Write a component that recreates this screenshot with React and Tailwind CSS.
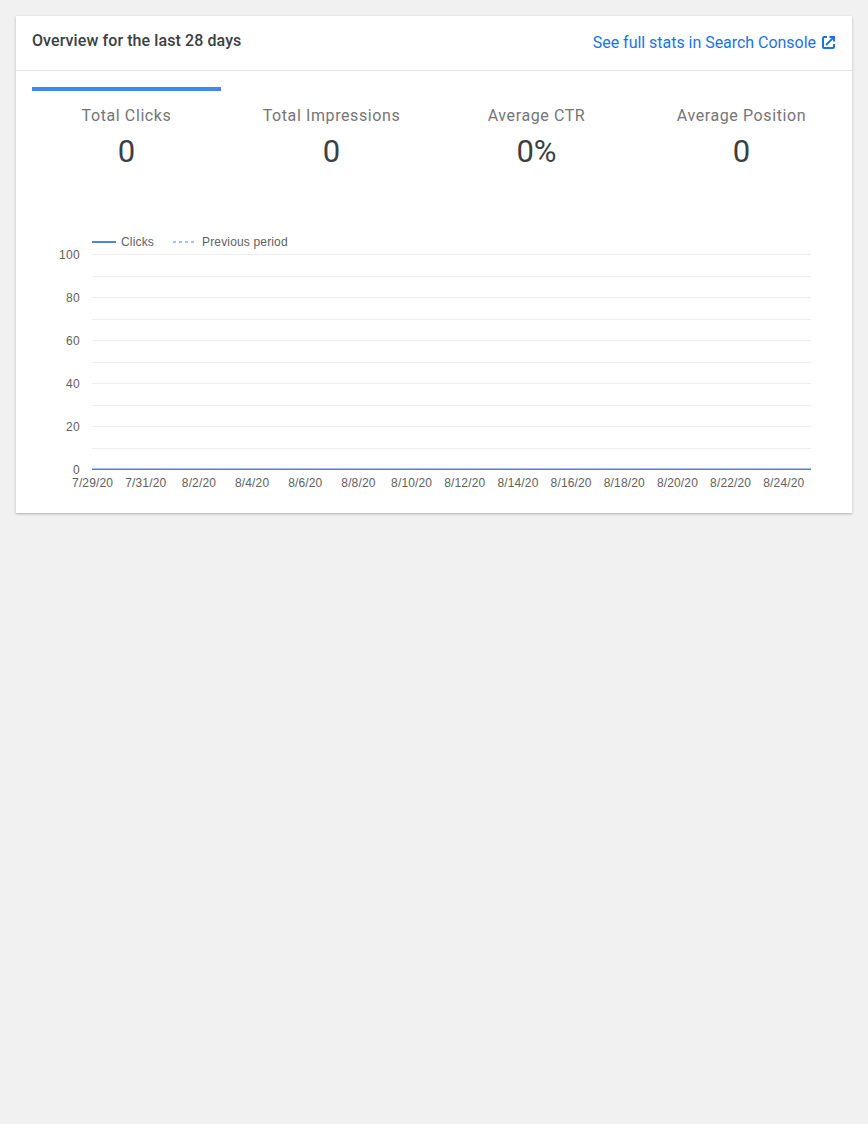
const stats = [
  { label: 'Total Clicks', value: '0', active: true },
  { label: 'Total Impressions', value: '0' },
  { label: 'Average CTR', value: '0%' },
  { label: 'Average Position', value: '0' },
];

const dates = [
  '7/29/20', '7/31/20', '8/2/20', '8/4/20', '8/6/20', '8/8/20', '8/10/20',
  '8/12/20', '8/14/20', '8/16/20', '8/18/20', '8/20/20', '8/22/20', '8/24/20',
];

const gridLines = [0, 22, 43, 65, 86, 108, 129, 151, 172, 194];
const yLabels = [100, 80, 60, 40, 20, 0];

function ExternalIcon() {
  return (
    <svg className="block h-[13px] w-[13px]" viewBox="0 0 13 13" fill="none" stroke="currentColor" strokeWidth="2">
      <path d="M5 1H2Q1 1 1 2V11Q1 12 2 12H11Q12 12 12 11V8" />
      <path d="M7.5 1H12V5.5" />
      <path d="M12 1L4 9" strokeWidth="1.8" />
    </svg>
  );
}

function Stat({ label, value, active }) {
  return (
    <button
      className={
        'flex flex-col items-center border-t-4 pt-[13px] ' +
        (active ? 'border-[#4285f4]' : 'border-transparent')
      }
    >
      <span className="text-base leading-6 tracking-[0.6px] text-[#757575]">{label}</span>
      <span className="mt-1 text-[31px] leading-10 text-[#3c4043]">{value}</span>
    </button>
  );
}

function Chart() {
  return (
    <svg
      className="block h-[273px] w-[804px] font-['Liberation_Sans',Arial,sans-serif] text-[12px]"
      viewBox="32 224 804 273"
      fill="#616161"
    >
      <g shapeRendering="crispEdges">
        <rect x="92" y="241" width="24" height="2" fill="#4285f4" />
        {[173, 179, 185, 191].map((x) => (
          <rect key={x} x={x} y="241" width="3" height="2" fill="#a0c2f9" />
        ))}
        {gridLines.map((y) => (
          <rect key={y} x="92" y={254 + y} width="719" height="1" fill="#eeeeee" />
        ))}
        <rect x="92" y="468" width="719" height="1" fill="#a0c2f9" />
        <rect x="92" y="469" width="719" height="1" fill="#4283ee" />
      </g>
      <text x="121" y="246" className="tracking-[0.16px]">Clicks</text>
      <text x="202" y="246" className="tracking-[0.16px]">Previous period</text>
      {yLabels.map((n, i) => (
        <text key={n} x="80" y={259 + i * 43} textAnchor="end" className="tracking-[0.33px]">{n}</text>
      ))}
      {dates.map((d, i) => (
        <text key={d} x={92.6 + i * 53.17} y="487" textAnchor="middle" className="tracking-[0.14px]">{d}</text>
      ))}
    </svg>
  );
}

export default function App() {
  return (
    <main className="min-h-screen bg-[#f1f1f1] p-4 font-['Roboto',sans-serif]">
      <section className="h-[497px] bg-white shadow-[0_1px_3px_rgba(0,0,0,0.2),0_1px_1px_rgba(0,0,0,0.08)]">
        <header className="flex h-[55px] justify-between border-b border-[#e2e2e2] pr-[17px] pl-4">
          <h1 className="pt-[13px] text-base leading-6 font-medium tracking-[0.09px] text-[#3c4043]">
            Overview for the last 28 days
          </h1>
          <a href="#" className="flex items-start gap-1.5 pt-[15px] text-base leading-6 tracking-[-0.03px] text-[#1a73e8]">
            See full stats in Search Console
            <span className="pt-[5px]"><ExternalIcon /></span>
          </a>
        </header>
        <div className="grid grid-cols-4 gap-4 px-4 pt-4">
          {stats.map((s) => (
            <Stat key={s.label} {...s} />
          ))}
        </div>
        <div className="px-4 pt-[52px]">
          <Chart />
        </div>
      </section>
    </main>
  );
}
